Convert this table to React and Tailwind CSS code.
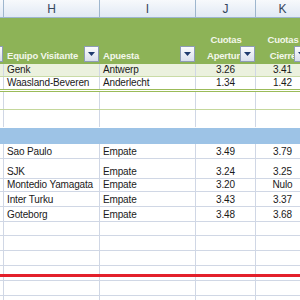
import React from 'react';

const W = ['w-[4px]', 'w-[96px]', 'w-[96px]', 'w-[60px]', 'w-[54px]'];

const FilterButton = () => (
  <div className="absolute right-[1px] bottom-[2px] w-[15px] h-[16px] border border-[#8e9cb6] bg-gradient-to-b from-[#fbfcfe] to-[#d9dfec] flex items-center justify-center">
    <svg width="7" height="4" viewBox="0 0 7 4">
      <path d="M0 0 L7 0 L3.5 4 Z" fill="#1f3a6e" />
    </svg>
  </div>
);

const rows = [
  { h: 'h-[15px]', t: 'Sao Paulo', p: 'Empate', j: '3.49', k: '3.79' },
  { h: 'h-[20px]', t: 'SJK', p: 'Empate', j: '3.24', k: '3.25' },
  { h: 'h-[13px]', t: 'Montedio Yamagata', p: 'Empate', j: '3.20', k: 'Nulo' },
  { h: 'h-[15px]', t: 'Inter Turku', p: 'Empate', j: '3.43', k: '3.37' },
  { h: 'h-[15px]', t: 'Goteborg', p: 'Empate', j: '3.48', k: '3.68' },
  { h: 'h-[14px]' },
  { h: 'h-[15px]' },
  { h: 'h-[15px]' },
  { h: 'h-[15px]' },
  { h: 'h-[15px]' },
  { h: 'h-[15px]' },
];

const DataRow = ({ h, t, p, j, k, bg = 'bg-white', line = 'border-[#d0d7e5]' }) => (
  <div className={`flex shrink-0 ${h} ${bg} border-b ${line}`}>
    <div className={`${W[0]} shrink-0 border-r border-[#d0d7e5]`}></div>
    <div className={`${W[1]} shrink-0 border-r border-[#d0d7e5] flex items-end pl-[3px] overflow-hidden whitespace-nowrap`}>{t}</div>
    <div className={`${W[2]} shrink-0 border-r border-[#d0d7e5] flex items-end pl-[3px] overflow-hidden whitespace-nowrap`}>{p}</div>
    <div className={`${W[3]} shrink-0 border-r border-[#d0d7e5] flex items-end justify-center`}>{j}</div>
    <div className={`${W[4]} shrink-0 border-r border-[#d0d7e5] flex items-end justify-center`}>{k}</div>
  </div>
);

export default function App() {
  return (
    <div className="relative w-[300px] h-[300px] overflow-hidden bg-white font-['Liberation_Sans',Arial,sans-serif] text-[10px] leading-[12px] tracking-[-0.15px] text-[#1a1a1a]">
      {/* Column letters */}
      <div className="flex h-[18px] bg-gradient-to-b from-[#f7f9fc] to-[#e1e9f4] border-b border-[#9eb6ce] text-[12px] text-[#34465c] tracking-normal">
        <div className={`${W[0]} shrink-0 border-r border-[#9eb6ce]`}></div>
        <div className={`${W[1]} shrink-0 border-r border-[#9eb6ce] flex items-center justify-center`}>H</div>
        <div className={`${W[2]} shrink-0 border-r border-[#9eb6ce] flex items-center justify-center`}>I</div>
        <div className={`${W[3]} shrink-0 border-r border-[#9eb6ce] flex items-center justify-center`}>J</div>
        <div className={`${W[4]} shrink-0 border-r border-[#9eb6ce] flex items-center justify-center`}>K</div>
      </div>

      {/* Table header */}
      <div className="flex h-[46px] bg-[#8db357] text-[#f3f7ea] font-bold text-[9.5px] leading-[16px] tracking-[-0.2px]">
        <div className={`${W[0]} shrink-0 relative overflow-hidden`}>
          <FilterButton />
        </div>
        <div className={`${W[1]} shrink-0 relative flex items-end pl-[3px] whitespace-nowrap`}>
          Equipo Visitante
          <FilterButton />
        </div>
        <div className={`${W[2]} shrink-0 relative flex items-end pl-[3px] whitespace-nowrap`}>
          Apuesta
          <FilterButton />
        </div>
        <div className={`${W[3]} shrink-0 relative flex items-end justify-center text-center overflow-hidden`}>
          <span>Cuotas<br />Apertura</span>
          <FilterButton />
        </div>
        <div className={`${W[4]} shrink-0 relative flex items-end justify-center text-center overflow-hidden`}>
          <span>Cuotas<br />Cierre</span>
          <FilterButton />
        </div>
      </div>

      <DataRow h="h-[13px]" t="Genk" p="Antwerp" j="3.26" k="3.41" bg="bg-[#ebf1de]" line="border-[#c9dba6]" />
      <div className="flex shrink-0 h-[15px] bg-white border-b-[3px] border-double border-[#9bbb59]">
        <div className={`${W[0]} shrink-0 border-r border-[#d0d7e5]`}></div>
        <div className={`${W[1]} shrink-0 border-r border-[#d0d7e5] flex items-end pl-[3px] whitespace-nowrap`}>Waasland-Beveren</div>
        <div className={`${W[2]} shrink-0 border-r border-[#d0d7e5] flex items-end pl-[3px] whitespace-nowrap`}>Anderlecht</div>
        <div className={`${W[3]} shrink-0 border-r border-[#d0d7e5] flex items-end justify-center`}>1.34</div>
        <div className={`${W[4]} shrink-0 border-r border-[#d0d7e5] flex items-end justify-center`}>1.42</div>
      </div>

      <DataRow h="h-[18px]" line="border-[#c4d79b]" />
      <DataRow h="h-[18px]" line="border-transparent" />

      {/* Blue band */}
      <div className="h-[16px] bg-[#9dc3e6]"></div>

      {rows.map((r, i) => (
        <DataRow key={i} {...r} />
      ))}

      {/* Red drawn line */}
      <div className="absolute left-0 top-[274px] w-[300px] h-[3px] bg-[#e3202b]"></div>
    </div>
  );
}
